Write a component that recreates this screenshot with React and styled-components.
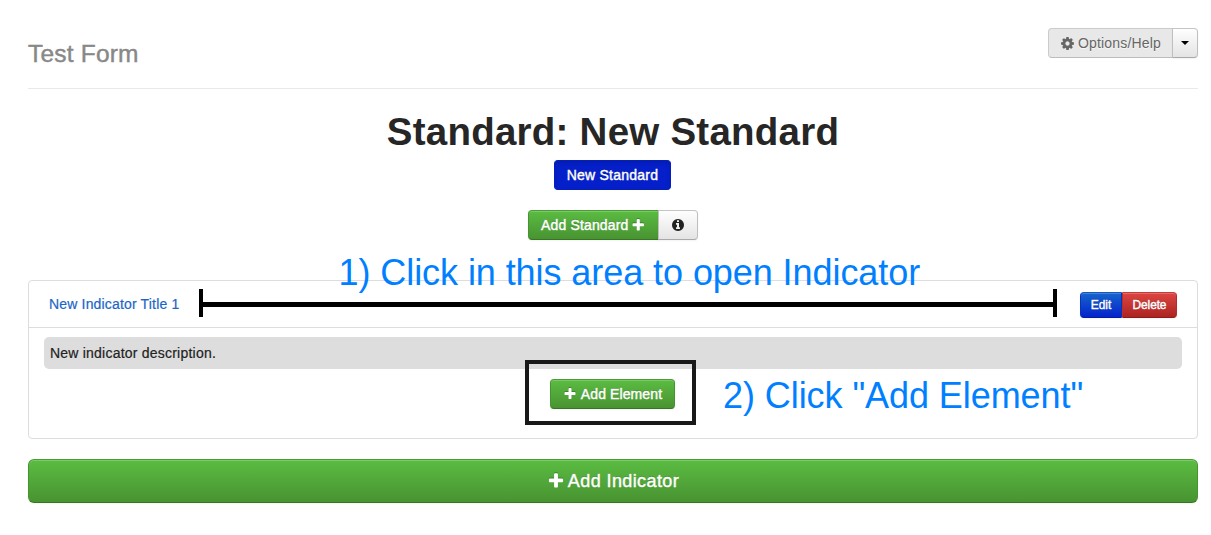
import React from "react";
import styled, { createGlobalStyle } from "styled-components";

const GlobalStyle = createGlobalStyle`
  *, *::before, *::after { box-sizing: border-box; }
  html { background: #fff; }
  body {
    margin: 0;
    background: #fff;
    color: #222;
    font-family: "Liberation Sans", Arial, sans-serif;
    font-size: 14px;
    line-height: 20px;
  }
`;

const ICONS = {
  plus: "M1600 736v192q0 40-28 68t-68 28h-416v416q0 40-28 68t-68 28h-192q-40 0-68-28t-28-68v-416h-416q-40 0-68-28t-28-68v-192q0-40 28-68t68-28h416v-416q0-40 28-68t68-28h192q40 0 68 28t28 68v416h416q40 0 68 28t28 68z",
  cog: "M1152 896q0-106-75-181t-181-75-181 75-75 181 75 181 181 75 181-75 75-181zm512-109v222q0 12-8 23t-20 13l-185 28q-19 54-39 91 35 50 107 138 10 12 10 25t-9 23q-27 37-99 108t-94 71q-12 0-26-9l-138-108q-44 23-91 38-16 136-29 186-7 28-36 28h-222q-14 0-24.500-8.500t-11.500-21.500l-28-184q-49-16-90-37l-141 107q-10 9-25 9-14 0-25-11-126-114-165-168-7-10-7-23 0-12 8-23 15-21 51-66.500t54-70.500q-27-50-41-99l-183-27q-13-2-21-12.500t-8-23.500v-222q0-12 8-23t19-13l186-28q14-46 39-92-40-57-107-138-10-12-10-24 0-10 9-23 26-36 98.500-107.500t94.500-71.500q13 0 26 10l138 107q44-23 91-38 16-136 29-186 7-28 36-28h222q14 0 24.500 8.500t11.500 21.500l28 184q49 16 90 37l142-107q9-9 24-9 13 0 25 10 129 119 165 170 7 8 7 22 0 12-8 23-15 21-51 66.500t-54 70.500q26 50 41 98l183 28q13 2 21 12.500t8 23.500z",
  info: "M1152 1376v-160q0-14-9-23t-23-9h-96v-512q0-14-9-23t-23-9h-320q-14 0-23 9t-9 23v160q0 14 9 23t23 9h96v320h-96q-14 0-23 9t-9 23v160q0 14 9 23t23 9h448q14 0 23-9t9-23zm-128-896v-160q0-14-9-23t-23-9h-192q-14 0-23 9t-9 23v160q0 14 9 23t23 9h192q14 0 23-9t9-23zm640 416q0 209-103 385.500t-279.500 279.500-385.500 103-385.500-103-279.500-279.500-103-385.500 103-385.500 279.500-279.500 385.500-103 385.500 103 279.500 279.500 103 385.500z",
};

const Glyph = styled.svg`
  flex: none;
  width: ${(p) => p.$size}px;
  height: ${(p) => p.$size}px;
  fill: currentColor;
  filter: ${(p) => (p.$shadow ? "drop-shadow(0 -1px 0 rgba(0, 0, 0, 0.25))" : "none")};
`;

const Icon = ({ name, size = 14, shadow }) => (
  <Glyph viewBox="0 0 1792 1792" $size={size} $shadow={shadow} aria-hidden="true">
    <path d={ICONS[name]} />
  </Glyph>
);

const Page = styled.main`
  width: 1211px;
  height: 535px;
  padding: 28px 13px 0 28px;
  overflow: hidden;
`;

const PageHeader = styled.header`
  display: flex;
  justify-content: space-between;
  align-items: flex-start;
  height: 61px;
  border-bottom: 1px solid #e9e9e9;
`;

const FormName = styled.h3`
  margin: 6px 0 0;
  font-size: 24.5px;
  font-weight: 400;
  line-height: 40px;
  letter-spacing: 0.2px;
  color: #888;
  -webkit-text-stroke: 0.45px #888;
`;

const themes = {
  green: {
    bg: "linear-gradient(#5bbd42, #489231)",
    border: "#4a9c36 #469332 #357523",
    color: "#fff",
  },
  active: { bg: "#0520cb", border: "#0520b4 #041fc0 #0420b0", color: "#fff" },
  blue: { bg: "linear-gradient(#1767cd, #0320cc)", border: "#1458b5 #0733bb #041da0", color: "#fff" },
  red: { bg: "linear-gradient(#df4743, #aa221f)", border: "#c33c39 #b02f2b #8a1c19", color: "#fff" },
  light: { bg: "linear-gradient(#fff, #e3e3e3)", border: "#c5c5c5 #bfbfbf #a8a8a8", color: "#222" },
  disabled: { bg: "#e8e8e8", border: "#cbcbcb #cbcbcb #bcbcbc", color: "#666" },
};

const Button = styled.button`
  display: flex;
  align-items: center;
  justify-content: center;
  gap: ${(p) => p.$gap ?? 4}px;
  width: ${(p) => (p.$width ? `${p.$width}px` : "100%")};
  height: ${(p) => p.$height ?? 30}px;
  margin: 0;
  padding: 0;
  border: 1px solid;
  border-color: ${(p) => themes[p.$tone].border};
  border-radius: ${(p) => p.$radius ?? "4px"};
  background: ${(p) => themes[p.$tone].bg} border-box;
  color: ${(p) => themes[p.$tone].color};
  font-family: inherit;
  font-size: ${(p) => p.$font ?? 14}px;
  line-height: 20px;
  letter-spacing: ${(p) => p.$track ?? 0}px;
  white-space: nowrap;
  text-shadow: ${(p) =>
    themes[p.$tone].color === "#fff" ? "0 -1px 0 rgba(0, 0, 0, 0.25)" : "0 1px 1px rgba(255, 255, 255, 0.75)"};
  -webkit-text-stroke: ${(p) => (themes[p.$tone].color === "#fff" ? "0.4px #fff" : "0")};
  box-shadow: ${(p) =>
    p.$tone === "active"
      ? "inset 0 2px 4px rgba(0, 0, 0, 0.15)"
      : p.$tone === "disabled"
      ? "none"
      : "inset 0 1px 0 rgba(255, 255, 255, 0.2), 0 1px 2px rgba(0, 0, 0, 0.05)"};
`;

const ButtonGroup = styled.div`
  display: flex;
  button + button { margin-left: ${(p) => p.$overlap ?? 0}px; }
`;

const SmallButtonGroup = styled(ButtonGroup)`
  margin-top: 2px;
  button + button { border-left-color: #b5302d; }
`;

const Caret = styled.span`
  border: 4px solid transparent;
  border-top-color: #000;
  border-bottom: 0;
`;

const Standards = styled.section`
  display: flex;
  flex-direction: column;
  align-items: center;
  height: 191px;
  padding-top: 23px;
`;

const Title = styled.h1`
  margin: 0 0 8px;
  font-size: 38.5px;
  font-weight: 700;
  line-height: 40px;
  letter-spacing: 0.24px;
  color: #262626;
  white-space: nowrap;
`;

const CurrentStandard = styled(Button)`
  margin: 0 1px 20px 0;
`;

const AddElement = styled(Button)`
  margin-right: 1px;
`;

const Indicator = styled.section`
  position: relative;
  height: 159px;
  border: 1px solid #ddd;
  border-radius: 4px;
`;

const IndicatorHeading = styled.div`
  display: flex;
  align-items: center;
  height: 47px;
  padding: 0 20px;
  border-bottom: 1px solid #ddd;
`;

const IndicatorLink = styled.a`
  width: 150px;
  color: #1a66c8;
  letter-spacing: 0.17px;
  white-space: nowrap;
  -webkit-text-stroke: 0.2px #1a66c8;
`;

const Span = styled.div`
  width: 858px;
  height: 28px;
  margin: -2px 23px 0 0;
  display: flex;
  align-items: center;
  border: solid #000;
  border-width: 0 4px;

  &::before {
    content: "";
    flex: 1;
    height: 5px;
    margin-top: 3px;
    background: #000;
  }
`;

const IndicatorBody = styled.div`
  display: flex;
  flex-direction: column;
  align-items: center;
  gap: 10px;
  padding: 9px 15px;
`;

const Description = styled.p`
  width: 100%;
  margin: 0;
  padding: 6px;
  border-radius: 5px;
  background: #ddd;
  color: #222;
  letter-spacing: 0.22px;
  -webkit-text-stroke: 0.2px #222;
`;

const Note = styled.div`
  position: absolute;
  left: ${(p) => p.$x}px;
  top: ${(p) => p.$y}px;
  font-size: 36px;
  line-height: 42px;
  letter-spacing: -0.07px;
  color: #0080ff;
  white-space: nowrap;
`;

const Highlight = styled.div`
  position: absolute;
  left: 496px;
  top: 79px;
  width: 171px;
  height: 65px;
  border: 4px solid #191919;
  pointer-events: none;
`;

const Footer = styled.div`
  margin-top: 20px;
`;

export default function App() {
  return (
    <>
      <GlobalStyle />
      <Page>
        <PageHeader>
          <FormName>Test Form</FormName>
          <ButtonGroup $overlap={-1}>
            <Button $tone="disabled" $width={125} $radius="4px 0 0 4px" $gap={3} $track={0.17}>
              <Icon name="cog" size={15} />
              <span>Options/Help</span>
            </Button>
            <Button $tone="light" $width={26} $radius="0 4px 4px 0">
              <Caret />
            </Button>
          </ButtonGroup>
        </PageHeader>

        <Standards>
          <Title>Standard: New Standard</Title>
          <CurrentStandard $tone="active" $width={117} $track={0.24}>New Standard</CurrentStandard>
          <ButtonGroup $overlap={-1}>
            <Button $tone="green" $width={131} $radius="4px 0 0 4px" $track={0.14} $gap={3}>
              <span>Add Standard</span>
              <Icon name="plus" size={14.5} shadow />
            </Button>
            <Button $tone="light" $width={40} $radius="0 4px 4px 0">
              <Icon name="info" />
            </Button>
          </ButtonGroup>
        </Standards>

        <Indicator>
          <IndicatorHeading>
            <IndicatorLink>New Indicator Title 1</IndicatorLink>
            <Span />
            <SmallButtonGroup>
              <Button $tone="blue" $width={42} $height={26} $font={11.9} $radius="4px 0 0 4px">Edit</Button>
              <Button $tone="red" $width={55} $height={26} $font={11.9} $radius="0 4px 4px 0" $track={-0.1}>Delete</Button>
            </SmallButtonGroup>
          </IndicatorHeading>
          <IndicatorBody>
            <Description>New indicator description.</Description>
            <AddElement $tone="green" $width={125} $track={0.1}>
              <Icon name="plus" shadow />
              <span>Add Element</span>
            </AddElement>
          </IndicatorBody>
          <Highlight />
          <Note $x={309.5} $y={-29}>1) Click in this area to open Indicator</Note>
          <Note $x={694} $y={94}>2) Click "Add Element"</Note>
        </Indicator>

        <Footer>
          <Button $tone="green" $height={44} $font={18} $radius="6px" $track={0.4} $gap={3}>
            <Icon name="plus" size={18} shadow />
            <span>Add Indicator</span>
          </Button>
        </Footer>
      </Page>
    </>
  );
}
